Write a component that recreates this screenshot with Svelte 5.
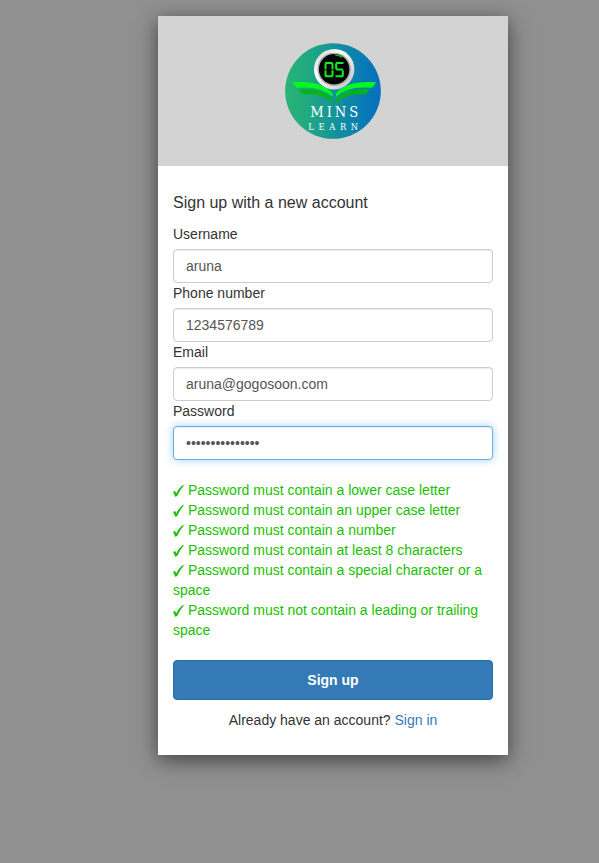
<script>
  let username = $state('aruna');
  let phone = $state('1234576789');
  let email = $state('aruna@gogosoon.com');
  let password = $state('Learn5mins@2023');

  const rules = [
    'Password must contain a lower case letter',
    'Password must contain an upper case letter',
    'Password must contain a number',
    'Password must contain at least 8 characters',
    'Password must contain a special character or a space',
    'Password must not contain a leading or trailing space'
  ];
</script>

<main class="page">
  <div class="card">
    <header class="banner">
      <svg class="logo" viewBox="14 14 289 289" role="img" aria-label="05 Mins Learn">
        <defs>
          <linearGradient id="disc" x1="0" x2="1" y1="0" y2="0">
            <stop offset="0" stop-color="#28b573" />
            <stop offset="0.25" stop-color="#20a883" />
            <stop offset="0.85" stop-color="#0678b8" />
            <stop offset="1" stop-color="#0871bd" />
          </linearGradient>
          <linearGradient id="rim" x1="0" x2="1" y1="0" y2="1">
            <stop offset="0" stop-color="#c4c4c4" />
            <stop offset="0.35" stop-color="#ffffff" />
            <stop offset="0.7" stop-color="#dedede" />
            <stop offset="1" stop-color="#b8b8b8" />
          </linearGradient>
        </defs>
        <circle cx="158.500" cy="158.500" r="144" fill="url(#disc)" />
        <path d="M55 153 Q130 148 158 184 L159 195 Q128 164 69 169 Z" fill="#07b31b" />
        <path d="M270 153 Q195 148 168 184 L167 195 Q197 164 256 169 Z" fill="#07b31b" />
        <path d="M36 132 Q124 126 157 165 L157 176 Q122 142 49 149 Z" fill="#05fb1b" />
        <path d="M289 132 Q201 126 168 165 L168 176 Q203 142 276 149 Z" fill="#05fb1b" />
        <circle cx="162" cy="93" r="61" fill="url(#rim)" />
        <circle cx="162" cy="93" r="50" fill="#8e9490" />
        <circle cx="162" cy="93" r="47" fill="none" stroke="#e4e8e4" stroke-width="2" />
        <circle cx="162" cy="93" r="46" fill="#020502" />
        <path d="M165 50 A43 43 0 0 1 187 57" fill="none" stroke="#08b914" stroke-width="5" />
        <g fill="none" stroke="#12ee20" stroke-width="6">
          <path d="M135 74 H157 M136 75 V93 M157 75 V93 M136 96 V114 M157 96 V114 M135 114 H157" />
          <path d="M190 74 H167 M168 75 V93 M168 94 H188 M188 96 V114 M166 114 H189" />
        </g>
        <text class="mins" x="90" y="237">MINS</text>
        <text class="learn" x="84" y="275">LEARN</text>
      </svg>
    </header>

    <form class="body" onsubmit={(e) => e.preventDefault()}>
      <h1>Sign up with a new account</h1>

      <label for="username">Username</label>
      <input id="username" type="text" bind:value={username} />
      <label for="phone">Phone number</label>
      <input id="phone" type="tel" bind:value={phone} />
      <label for="email">Email</label>
      <input id="email" type="email" bind:value={email} />
      <label for="password">Password</label>
      <input id="password" class="active" type="password" bind:value={password} />

      <div class="rules">
        {#each rules as rule}
          <div>
            <svg class="check" viewBox="0 0 11 12" aria-hidden="true">
              <path d="M0 7 L2 6 Q2.800 6.800 3.200 8.400 Q5.600 3.400 9.500 0.200 L11 0.200 Q6.900 4.800 4.200 11 L2.100 11.800 Q1.400 8.600 0 7 Z" />
            </svg>
            {rule}
          </div>
        {/each}
      </div>

      <button type="submit">Sign up</button>
      <p>Already have an account? <a href="#signin">Sign in</a></p>
    </form>
  </div>
</main>

<style>
  :global(body) {
    background: #909090;
  }

  .page {
    display: flex;
    justify-content: center;
    align-items: flex-start;
    box-sizing: border-box;
    min-height: 100vh;
    padding: 16px 0 16px 67px;
    font-family: "Liberation Sans", Arial, sans-serif;
    font-size: 14px;
    line-height: 20px;
    color: #333;
  }

  .card {
    width: 100%;
    max-width: 350px;
    background: #fff;
    box-shadow: 0 5px 20px rgba(0, 0, 0, 0.55);
  }

  .banner {
    display: flex;
    justify-content: center;
    padding: 27px 0;
    background: #d3d3d3;
  }

  .logo {
    display: block;
    width: 96px;
    height: 96px;
  }

  .logo text {
    font-family: "DejaVu Serif Condensed", "DejaVu Serif", serif;
    fill: #fff;
  }

  .mins {
    font-size: 44px;
    letter-spacing: 9px;
  }

  .learn {
    font-size: 28px;
    letter-spacing: 14px;
  }

  .body {
    padding: 25px 15px;
  }

  h1 {
    margin: 0 0 9px;
    font-size: 16px;
    font-weight: 400;
    line-height: 24px;
  }

  label {
    display: block;
    margin-bottom: 5px;
  }

  input {
    display: block;
    box-sizing: border-box;
    width: 100%;
    height: 34px;
    padding: 6px 12px;
    border: 1px solid #ccc;
    border-radius: 4px;
    outline: none;
    background: #fff;
    box-shadow: inset 0 1px 1px rgba(0, 0, 0, 0.075);
    color: #555;
    font: inherit;
  }

  input:focus,
  .active {
    border-color: #66afe9;
    box-shadow:
      inset 0 1px 1px rgba(0, 0, 0, 0.075),
      0 0 8px rgba(102, 175, 233, 0.6);
  }

  .rules {
    margin: 20px 0;
    color: #19bf00;
  }

  .check {
    width: 11px;
    height: 12px;
    fill: currentColor;
    vertical-align: middle;
  }

  button {
    display: block;
    width: 100%;
    height: 40px;
    border: 1px solid #2e6da4;
    border-radius: 4px;
    background: #337ab7;
    color: #fff;
    font: inherit;
    font-weight: 700;
    cursor: pointer;
  }

  p {
    margin: 10px 0 0;
    text-align: center;
  }

  a {
    color: #337ab7;
    text-decoration: none;
  }
</style>
